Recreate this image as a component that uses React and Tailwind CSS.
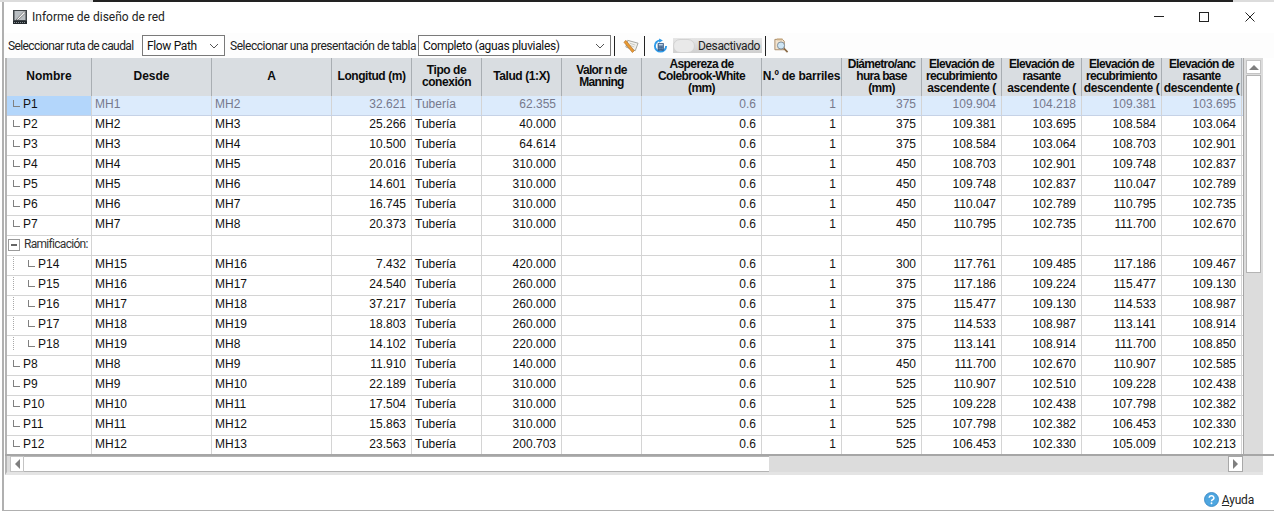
import React from "react";

const colClasses = [
  "w-[85px]", "w-[120px]", "w-[120px]", "w-[80px]", "w-[70px]", "w-[80px]", "w-[80px]",
  "w-[120px]", "w-[80px]", "w-[80px]", "w-[80px]", "w-[80px]", "w-[80px]", "w-[80px]",
];

// header lines, with the letter spacing each one needs to fit like the original
const headers = [
  { lines: ["Nombre"], track: "tracking-[0px]" },
  { lines: ["Desde"], track: "tracking-[0px]" },
  { lines: ["A"], track: "tracking-[0px]" },
  { lines: ["Longitud (m)"], track: "tracking-[-0.45px]" },
  { lines: ["Tipo de", "conexión"], track: "tracking-[-0.45px]" },
  { lines: ["Talud (1:X)"], track: "tracking-[-0.4px]" },
  { lines: ["Valor n de", "Manning"], track: "tracking-[-0.7px]" },
  { lines: ["Aspereza de", "Colebrook-White", "(mm)"], track: "tracking-[-0.6px]" },
  { lines: ["N.º de barriles"], track: "tracking-[-0.2px]" },
  { lines: ["Diámetro/anc", "hura base", "(mm)"], track: "tracking-[-0.7px]" },
  { lines: ["Elevación de", "recubrimiento", "ascendente ("], track: "tracking-[-0.7px]" },
  { lines: ["Elevación de", "rasante", "ascendente ("], track: "tracking-[-0.7px]" },
  { lines: ["Elevación de", "recubrimiento", "descendente ("], track: "tracking-[-0.7px]" },
  { lines: ["Elevación de", "rasante", "descendente ("], track: "tracking-[-0.7px]" },
];

const rows = [
  ["P1", "MH1", "MH2", "32.621", "62.355", "375", "109.904", "104.218", "109.381", "103.695"],
  ["P2", "MH2", "MH3", "25.266", "40.000", "375", "109.381", "103.695", "108.584", "103.064"],
  ["P3", "MH3", "MH4", "10.500", "64.614", "375", "108.584", "103.064", "108.703", "102.901"],
  ["P4", "MH4", "MH5", "20.016", "310.000", "450", "108.703", "102.901", "109.748", "102.837"],
  ["P5", "MH5", "MH6", "14.601", "310.000", "450", "109.748", "102.837", "110.047", "102.789"],
  ["P6", "MH6", "MH7", "16.745", "310.000", "450", "110.047", "102.789", "110.795", "102.735"],
  ["P7", "MH7", "MH8", "20.373", "310.000", "450", "110.795", "102.735", "111.700", "102.670"],
  "branch",
  ["P14", "MH15", "MH16", "7.432", "420.000", "300", "117.761", "109.485", "117.186", "109.467", true],
  ["P15", "MH16", "MH17", "24.540", "260.000", "375", "117.186", "109.224", "115.477", "109.130", true],
  ["P16", "MH17", "MH18", "37.217", "260.000", "375", "115.477", "109.130", "114.533", "108.987", true],
  ["P17", "MH18", "MH19", "18.803", "260.000", "375", "114.533", "108.987", "113.141", "108.914", true],
  ["P18", "MH19", "MH8", "14.102", "220.000", "375", "113.141", "108.914", "111.700", "108.850", true],
  ["P8", "MH8", "MH9", "11.910", "140.000", "450", "111.700", "102.670", "110.907", "102.585"],
  ["P9", "MH9", "MH10", "22.189", "310.000", "525", "110.907", "102.510", "109.228", "102.438"],
  ["P10", "MH10", "MH11", "17.504", "310.000", "525", "109.228", "102.438", "107.798", "102.382"],
  ["P11", "MH11", "MH12", "15.863", "310.000", "525", "107.798", "102.382", "106.453", "102.330"],
  ["P12", "MH12", "MH13", "23.563", "200.703", "525", "106.453", "102.330", "105.009", "102.213"],
];

const Chevron = () => (
  <svg width="10" height="6" viewBox="0 0 10 6" className="shrink-0">
    <path d="M1 1l4 4 4-4" fill="none" stroke="#555" strokeWidth="1" />
  </svg>
);

const Select = ({ className, children }) => (
  <div className={`flex h-[21px] shrink-0 items-center justify-between border border-[#7a7a7a] bg-white pl-[4px] pr-[5px] text-[#111] ${className}`}>
    <span className="whitespace-nowrap">{children}</span>
    <Chevron />
  </div>
);

const Sep = ({ className }) => <div className={`h-[20px] w-px shrink-0 bg-[#222] ${className}`} />;

const TreeMark = ({ child }) => (
  <>
    {child && <span className="ml-[6px] mr-[14px] h-[13px] w-px shrink-0 border-l border-dotted border-[#a8a8a8]" />}
    <span className={`${child ? "" : "ml-[6px]"} mr-[3px] h-[7px] w-[7px] shrink-0 border-b border-l border-[#808080]`} />
  </>
);

const Row = ({ row, selected }) => {
  const [name, from, to, len, slope, dia, a, b, c, d, child] = row;
  const txt = selected ? "text-[#76798c]" : "text-[#111]";
  const cell = "flex h-full shrink-0 items-center border-r border-[#d4d4d4] pb-[4px]";
  const right = `${cell} justify-end pr-[5px]`;
  const left = `${cell} pl-[3px]`;
  return (
    <div className={`flex h-[20px] shrink-0 border-b ${selected ? "border-[#c6d2e6] bg-[#dcebfc]" : "border-[#d4d4d4]"} ${txt}`}>
      <div className={`${cell} ${colClasses[0]} ${selected ? "bg-[#b3d6fb]" : ""} text-[#111]`}>
        <TreeMark child={child} />
        <span>{name}</span>
      </div>
      <div className={`${left} ${colClasses[1]}`}>{from}</div>
      <div className={`${left} ${colClasses[2]}`}>{to}</div>
      <div className={`${right} ${colClasses[3]}`}>{len}</div>
      <div className={`${left} ${colClasses[4]}`}>Tubería</div>
      <div className={`${right} ${colClasses[5]}`}>{slope}</div>
      <div className={`${right} ${colClasses[6]}`} />
      <div className={`${right} ${colClasses[7]}`}>0.6</div>
      <div className={`${right} ${colClasses[8]}`}>1</div>
      <div className={`${right} ${colClasses[9]}`}>{dia}</div>
      <div className={`${right} ${colClasses[10]}`}>{a}</div>
      <div className={`${right} ${colClasses[11]}`}>{b}</div>
      <div className={`${right} ${colClasses[12]}`}>{c}</div>
      <div className={`${right} ${colClasses[13]}`}>{d}</div>
    </div>
  );
};

const BranchRow = () => (
  <div className="flex h-[20px] shrink-0 border-b border-[#d4d4d4] text-[#333]">
    <div className={`flex h-full shrink-0 items-center border-r border-[#d4d4d4] pb-[4px] pl-[1px] font-['Roboto',sans-serif] tracking-[-0.7px] ${colClasses[0]}`}>
      <span className="mr-[4px] mt-[3px] flex h-[12px] w-[12px] shrink-0 items-center justify-center border border-[#9a9a9a]">
        <span className="h-[2px] w-[6px] bg-[#666]" />
      </span>
      <span className="whitespace-nowrap">Ramificación:</span>
    </div>
    {colClasses.slice(1).map((w, i) => (
      <div key={i} className={`h-full shrink-0 border-r border-[#d4d4d4] ${w}`} />
    ))}
  </div>
);

export default function App() {
  return (
    <div className="relative h-[511px] w-[1274px] overflow-hidden bg-white font-['Liberation_Sans',sans-serif] text-[12px] leading-none">
      <div className="ml-[2px] flex h-[511px] flex-col border-b border-l-2 border-[#b0b0b0]">
        {/* top edge */}
        <div className="-ml-[4px] flex h-[2px] shrink-0">
          <div className="h-full w-[93px] bg-[#dcdcdc]" />
          <div className="h-full w-[1140px] bg-[#222]" />
          <div className="h-full flex-1 bg-[#dcdcdc]" />
        </div>

        {/* title bar */}
        <div className="flex h-[31px] shrink-0 items-center font-['Roboto',sans-serif] text-[12px] text-[#222]">
          <svg width="16" height="16" viewBox="0 0 16 16" className="mb-[2px] ml-[8px] mr-[4px] shrink-0">
            <rect x="1" y="1" width="14" height="14" fill="#3f4448" />
            <rect x="2.5" y="2" width="11" height="9" fill="#b9bec2" />
            <path d="M4 11L12 2.5l1.5 1.5L6 11z" fill="#f5f5f5" stroke="#333" strokeWidth="0.5" />
            <rect x="1" y="12" width="14" height="3" fill="#22282c" />
            <path d="M2 13.5h12" stroke="#8a9094" strokeDasharray="1 1" />
          </svg>
          <span className="mb-[1px]">Informe de diseño de red</span>
          <div className="mb-[2px] ml-auto flex items-center">
            <div className="h-px w-[10px] bg-[#222]" />
            <div className="ml-[35px] h-[10px] w-[10px] border border-[#222]" />
            <svg width="10" height="10" viewBox="0 0 10 10" className="ml-[36px] mr-[19px]">
              <path d="M.5.5l9 9M9.5.5l-9 9" stroke="#222" strokeWidth="1" />
            </svg>
          </div>
        </div>

        {/* toolbar */}
        <div className="flex h-[25px] shrink-0 items-center bg-[#fdfdfd] font-['Roboto',sans-serif] text-[12px] tracking-[-0.35px] text-[#222]">
          <span className="ml-[4px] w-[134px] shrink-0 whitespace-nowrap tracking-[-0.6px]">Seleccionar ruta de caudal</span>
          <Select className="w-[83px]">Flow Path</Select>
          <span className="ml-[5px] w-[188px] shrink-0 whitespace-nowrap tracking-[-0.46px]">Seleccionar una presentación de tabla</span>
          <Select className="w-[193px]">Completo (aguas pluviales)</Select>
          <Sep className="ml-[3px]" />
          <svg width="16" height="16" viewBox="0 0 17 16" className="ml-[8px] shrink-0">
            <path d="M5 2l11 3-3 8-10-4z" fill="#f2f2ee" stroke="#8d8d86" strokeWidth="0.8" />
            <path d="M7 5l6 2M6 7l6 2" stroke="#b5b5ad" strokeWidth="0.7" />
            <path d="M1 4l2-2 9 11-2 2z" fill="#e99a33" stroke="#a8641b" strokeWidth="0.6" />
          </svg>
          <Sep className="ml-[5px]" />
          <svg width="15" height="16" viewBox="0 0 16 16" className="ml-[8px] shrink-0">
            <path d="M8 2a6 6 0 1 0 6 6" fill="none" stroke="#2d9bea" strokeWidth="2" />
            <path d="M6.5 0l4 2-4 2.5z" fill="#2d9bea" />
            <rect x="5" y="5" width="6.5" height="8" fill="#2a4f7d" />
            <rect x="6" y="6" width="4.5" height="1.5" fill="#cfe3f5" />
            <path d="M6 9h1M8 9h1M10 9h.6M6 11h1M8 11h1M10 11h.6" stroke="#cfe3f5" />
          </svg>
          <div className="ml-[5px] flex h-[15px] w-[89px] shrink-0 items-center bg-gradient-to-b from-[#e6e6e6] to-[#cfcfcf] text-[#222]">
            <span className="h-[14px] w-[22px] shrink-0 rounded-full border border-[#d2d2d2] bg-[#e9e9e9]" />
            <span className="ml-[3px] whitespace-nowrap">Desactivado</span>
          </div>
          <Sep className="ml-[3px]" />
          <svg width="16" height="17" viewBox="0 0 17 17" className="ml-[7px] shrink-0">
            <path d="M2 2h8l2 2v9H2z" fill="#f3e4cf" stroke="#a88a66" strokeWidth="1" />
            <path d="M4 1h6v2H4z" fill="#c9ad86" />
            <circle cx="8.5" cy="8.5" r="3.8" fill="#cfe6f5" stroke="#7b8a96" />
            <path d="M11.5 11.5l4 4" stroke="#8a6a45" strokeWidth="1.8" />
          </svg>
        </div>

        {/* grid + vertical scrollbar */}
        <div className="ml-[1px] flex h-[398px] shrink-0 overflow-hidden border-b-2 border-[#a6a6a6]">
          <div className="flex w-[1238px] shrink-0 flex-col overflow-hidden border-l-2 border-[#b4b4b4]">
            <div className="flex h-[38px] shrink-0 bg-[#d9dde1] text-[#0c0c0c]">
              {headers.map((h, i) => (
                <div key={i} className={`flex h-full shrink-0 flex-col items-center justify-center whitespace-nowrap border-r border-[#a9aeb3] pb-[2px] text-center font-bold leading-[12px] ${h.track} ${colClasses[i]}`}>
                  {h.lines.map((l) => (
                    <span key={l} className={l.endsWith("(") ? "tracking-[-0.4px]" : ""}>{l}</span>
                  ))}
                </div>
              ))}
            </div>
            {rows.map((r, i) =>
              r === "branch" ? <BranchRow key={i} /> : <Row key={i} row={r} selected={i === 0} />
            )}
          </div>
          <div className="flex w-[20px] shrink-0 flex-col items-center border-l border-[#a6a6a6] bg-[#dcdcdc] pt-[2px]">
            <div className="flex h-[14px] w-[15px] shrink-0 items-center justify-center border border-[#c4c4c4] bg-white">
              <span className="h-0 w-0 border-x-[5px] border-b-[5px] border-x-transparent border-b-[#7f7f7f]" />
            </div>
            <div className="mt-px h-[198px] w-[15px] shrink-0 border border-[#b4b4b4] bg-white" />
          </div>
        </div>

        {/* horizontal scrollbar */}
        <div className="ml-[1px] flex h-[19px] w-[1258px] shrink-0 items-stretch border-b-[3px] border-l-2 border-b-[#e4e4e4] border-l-[#b4b4b4] bg-[#dcdcdc]">
          <div className="ml-[3px] flex w-[14px] shrink-0 items-center justify-center border border-[#c4c4c4] bg-white">
            <span className="h-0 w-0 border-y-[5px] border-r-[5px] border-y-transparent border-r-[#7f7f7f]" />
          </div>
          <div className="w-[745px] shrink-0 border-y border-[#b4b4b4] bg-white" />
          <div className="ml-auto mr-[20px] flex w-[15px] shrink-0 items-center justify-center border border-[#a8a8a8] bg-white">
            <span className="h-0 w-0 border-y-[5px] border-l-[5px] border-y-transparent border-l-[#7f7f7f]" />
          </div>
        </div>

        {/* footer */}
        <div className="flex min-h-0 flex-1 items-end justify-end pb-[3px] pr-[20px] font-['Roboto',sans-serif] text-[12px] tracking-[-0.2px] text-[#222]">
          <svg width="15" height="15" viewBox="0 0 16 16" className="mr-[3px] shrink-0">
            <circle cx="8" cy="8" r="7.5" fill="#4ea6e0" stroke="#2f7fbd" strokeWidth="0.8" />
            <path d="M5.5 6.2a2.5 2.2 0 1 1 3.6 2c-.8.5-1.1.8-1.1 1.6" fill="none" stroke="#fff" strokeWidth="1.6" />
            <circle cx="8" cy="12" r="1" fill="#fff" />
          </svg>
          <span className="mb-[1px]"><span className="underline">A</span>yuda</span>
        </div>
      </div>
    </div>
  );
}
